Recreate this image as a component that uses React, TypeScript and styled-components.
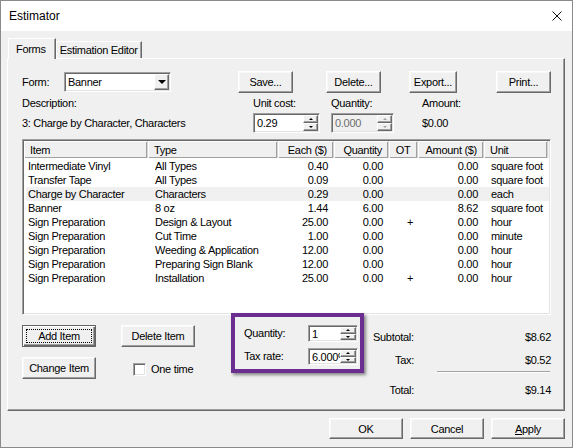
import styled, { createGlobalStyle } from "styled-components";

const GlobalStyle = createGlobalStyle`
  html, body {
    margin: 0;
    padding: 0;
    background: #fff;
  }
  body {
    font-family: "Liberation Sans", Arial, sans-serif;
    font-size: 11px;
    letter-spacing: -0.3px;
    color: #000;
  }
`;

const Window = styled.div`
  width: 573px;
  height: 448px;
  box-sizing: border-box;
  border: 1px solid #8a8a8a;
  background: #f0f0f0;
  display: flex;
  flex-direction: column;
`;

const TitleBar = styled.div`
  height: 30px;
  flex: none;
  background: #fff;
  display: flex;
  align-items: center;
  justify-content: space-between;
  padding: 0 10px 0 8px;
  font-size: 12px;
  letter-spacing: 0;
`;

const Body = styled.div`
  padding: 7px 7px 0 6px;
  display: flex;
  flex-direction: column;
`;

const TabsRow = styled.div`
  height: 20px;
  display: flex;
  align-items: flex-end;
  padding-left: 1px;
`;

const Tab = styled.div<{ $active?: boolean }>`
  box-sizing: border-box;
  height: ${(p) => (p.$active ? 21 : 17)}px;
  margin-bottom: ${(p) => (p.$active ? -1 : 0)}px;
  padding: ${(p) => (p.$active ? "0 9px 0 7px" : "0 3px 0 3px")};
  display: flex;
  align-items: center;
  background: #f0f0f0;
  border-top: 1px solid #fff;
  border-left: 1px solid #fff;
  border-right: 1px solid #696969;
  box-shadow: inset -1px 0 #a0a0a0;
  position: relative;
  z-index: ${(p) => (p.$active ? 1 : 0)};
`;

const Panel = styled.div`
  box-sizing: border-box;
  width: 558px;
  height: 353px;
  border: 1px solid;
  border-color: #fff #696969 #696969 #fff;
  box-shadow: inset -1px -1px #a0a0a0;
  padding: 12px 13px 0 14px;
  display: flex;
  flex-direction: column;
`;

const TopRow = styled.div`
  display: flex;
  align-items: center;
  height: 22px;
`;

const Label = styled.span<{ $w?: number }>`
  width: ${(p) => (p.$w ? `${p.$w}px` : "auto")};
  line-height: 13px;
  white-space: nowrap;
`;

const Button = styled.button<{ $w: number; $h?: number; $ml?: number; $default?: boolean }>`
  position: relative;
  box-sizing: border-box;
  width: ${(p) => p.$w}px;
  height: ${(p) => p.$h ?? 22}px;
  margin-left: ${(p) => p.$ml ?? 0}px;
  padding: 0;
  flex: none;
  font: inherit;
  letter-spacing: inherit;
  color: #000;
  background: #f0f0f0;
  border: 1px solid;
  border-color: ${(p) => (p.$default ? "#646464" : "#fff #696969 #696969 #fff")};
  box-shadow: ${(p) =>
    p.$default
      ? "inset 1px 1px #fff, inset -1px -1px #696969, inset -2px -2px #a0a0a0"
      : "inset -1px -1px #a0a0a0, inset 1px 1px #f8f8f8"};

  &::after {
    content: "";
    display: ${(p) => (p.$default ? "block" : "none")};
    position: absolute;
    inset: 3px;
    border: 1px dotted #000;
  }

  u {
    text-decoration: underline;
  }
`;

const Field = styled.div<{ $w: number; $h?: number; $disabled?: boolean }>`
  box-sizing: border-box;
  width: ${(p) => p.$w}px;
  height: ${(p) => p.$h ?? 20}px;
  border: 1px solid;
  border-color: #a0a0a0 #fff #fff #a0a0a0;
  box-shadow: inset 1px 1px #696969, inset -1px -1px #e3e3e3;
  background: ${(p) => (p.$disabled ? "#f0f0f0" : "#fff")};
  color: ${(p) => (p.$disabled ? "#6d6d6d" : "#000")};
  padding: 1px 1px 1px 2px;
  display: flex;
  align-items: stretch;
`;

const FieldText = styled.span`
  flex: 1;
  overflow: hidden;
  white-space: nowrap;
  display: flex;
  align-items: center;
  padding-left: 1px;
`;

const SpinCol = styled.div<{ $w?: number }>`
  width: ${(p) => p.$w ?? 15}px;
  display: flex;
  flex-direction: column;
`;

const SpinBtn = styled.div<{ $up?: boolean; $disabled?: boolean }>`
  flex: 1;
  box-sizing: border-box;
  border: 1px solid;
  border-color: #fff #696969 #696969 #fff;
  box-shadow: inset -1px -1px #a0a0a0;
  background: #f0f0f0;
  display: flex;
  align-items: center;
  justify-content: center;

  &::after {
    content: "";
    width: 0;
    height: 0;
    border-left: 2px solid transparent;
    border-right: 2px solid transparent;
    ${(p) => (p.$up ? "border-bottom" : "border-top")}: 2px solid
      ${(p) => (p.$disabled ? "#a0a0a0" : "#000")};
  }
`;

const DropBtn = styled.div`
  width: 15px;
  box-sizing: border-box;
  border: 1px solid;
  border-color: #fff #696969 #696969 #fff;
  box-shadow: inset -1px -1px #a0a0a0;
  background: #f0f0f0;
  display: flex;
  align-items: center;
  justify-content: center;

  &::after {
    content: "";
    border-left: 4px solid transparent;
    border-right: 4px solid transparent;
    border-top: 4px solid #000;
  }
`;

const InfoGrid = styled.div`
  display: grid;
  grid-template-columns: 231px 78px 91px 1fr;
  grid-template-rows: 13px 20px;
  row-gap: 3px;
  margin-top: 4px;
  align-items: center;
`;

const ListView = styled.div`
  box-sizing: border-box;
  margin-top: 6px;
  width: 529px;
  height: 176px;
  border: 1px solid;
  border-color: #a0a0a0 #fff #fff #a0a0a0;
  box-shadow: inset 1px 1px #696969, inset -1px -1px #e3e3e3;
  padding: 1px;
  background: #fff;
`;

const HEAD_COLS = "124px 130px 56px 55px 29px 66px 64px";
const ROW_COLS = "122px 130px 56px 55px 29px 66px 64px";

const HeaderRow = styled.div`
  display: grid;
  grid-template-columns: ${HEAD_COLS};
  height: 17px;
  background: #f0f0f0;
`;

type Align = "left" | "right" | "center";

const HeadCell = styled.div<{ $align: Align }>`
  box-sizing: border-box;
  display: flex;
  align-items: center;
  justify-content: ${(p) =>
    p.$align === "right" ? "flex-end" : p.$align === "center" ? "center" : "flex-start"};
  padding: 0 6px;
  box-shadow: inset 1px 1px #fff, inset -1px -1px #a0a0a0;
  border-right: 1px solid #d5d5d5;
  white-space: nowrap;
`;

const Rows = styled.div`
  padding-top: 1px;
`;

const Row = styled.div<{ $hl?: boolean }>`
  display: grid;
  grid-template-columns: ${ROW_COLS};
  height: 14px;
  margin-left: 2px;
  width: 523px;
  background: ${(p) => (p.$hl ? "#f0f0f0" : "transparent")};
`;

const Cell = styled.div<{ $align: Align; $pl?: number; $pr?: number }>`
  line-height: 14px;
  white-space: nowrap;
  overflow: hidden;
  text-align: ${(p) => p.$align};
  padding-left: ${(p) => p.$pl ?? 7}px;
  padding-right: ${(p) => p.$pr ?? 6}px;
`;

const BottomRow = styled.div`
  display: flex;
  align-items: flex-start;
  margin-top: 10px;
`;

const ItemButtons = styled.div`
  width: 173px;
  display: grid;
  grid-template-columns: 99px 74px;
  grid-template-rows: 22px 22px;
  row-gap: 10px;
  align-items: center;
`;

const CheckWrap = styled.label`
  display: flex;
  align-items: center;
  gap: 5px;
  margin-left: 12px;
  margin-top: 2px;
  white-space: nowrap;
`;

const CheckBox = styled.span`
  width: 13px;
  height: 13px;
  box-sizing: border-box;
  border: 1px solid;
  border-color: #a0a0a0 #fff #fff #a0a0a0;
  box-shadow: inset 1px 1px #696969, inset -1px -1px #e3e3e3;
  background: #fff;
`;

const TaxGroup = styled.div`
  position: relative;
  margin-left: 49px;
  display: grid;
  grid-template-columns: 64px 50px;
  grid-template-rows: 17px 17px;
  row-gap: 6px;
  align-items: center;

  &::after {
    content: "";
    position: absolute;
    top: -12px;
    left: -13px;
    right: -6px;
    bottom: -8px;
    border: 4px solid #6c2d91;
    box-shadow: 2px 2px 3px rgba(0, 0, 0, 0.45);
    pointer-events: none;
  }
`;

const Totals = styled.div`
  margin-left: 15px;
  margin-top: 5px;
  width: 178px;
  display: flex;
  flex-direction: column;
`;

const TotalLine = styled.div<{ $mt?: number }>`
  display: flex;
  justify-content: space-between;
  height: 14px;
  line-height: 14px;
  margin-top: ${(p) => p.$mt ?? 0}px;
`;

const TotalLabel = styled.span<{ $left?: boolean }>`
  width: 41px;
  text-align: ${(p) => (p.$left ? "left" : "right")};
  white-space: nowrap;
`;

const Rule = styled.div`
  margin: 4px 1px 0 64px;
  border-top: 1px solid #a0a0a0;
  border-bottom: 1px solid #fff;
`;

const Footer = styled.div`
  display: flex;
  justify-content: flex-end;
  gap: 7px;
  margin-top: 7px;
`;

const columns: { title: string; head: Align; cell: Align }[] = [
  { title: "Item", head: "left", cell: "left" },
  { title: "Type", head: "left", cell: "left" },
  { title: "Each ($)", head: "right", cell: "right" },
  { title: "Quantity", head: "right", cell: "right" },
  { title: "OT", head: "center", cell: "right" },
  { title: "Amount ($)", head: "right", cell: "right" },
  { title: "Unit", head: "left", cell: "left" },
];

const rows: string[][] = [
  ["Intermediate Vinyl", "All Types", "0.40", "0.00", "", "0.00", "square foot"],
  ["Transfer Tape", "All Types", "0.09", "0.00", "", "0.00", "square foot"],
  ["Charge by Character", "Characters", "0.29", "0.00", "", "0.00", "each"],
  ["Banner", "8 oz", "1.44", "6.00", "", "8.62", "square foot"],
  ["Sign Preparation", "Design & Layout", "25.00", "0.00", "+", "0.00", "hour"],
  ["Sign Preparation", "Cut Time", "1.00", "0.00", "", "0.00", "minute"],
  ["Sign Preparation", "Weeding & Application", "12.00", "0.00", "", "0.00", "hour"],
  ["Sign Preparation", "Preparing Sign Blank", "12.00", "0.00", "", "0.00", "hour"],
  ["Sign Preparation", "Installation", "25.00", "0.00", "+", "0.00", "hour"],
];

const Spinner = ({
  value,
  w,
  h,
  spinW,
  disabled,
}: {
  value: string;
  w: number;
  h?: number;
  spinW?: number;
  disabled?: boolean;
}) => (
  <Field $w={w} $h={h} $disabled={disabled}>
    <FieldText>{value}</FieldText>
    <SpinCol $w={spinW}>
      <SpinBtn $up $disabled={disabled} />
      <SpinBtn $disabled={disabled} />
    </SpinCol>
  </Field>
);

const CloseIcon = () => (
  <svg width="10" height="10" viewBox="0 0 10 10">
    <path d="M0.5 0.5 L9.5 9.5 M9.5 0.5 L0.5 9.5" stroke="#111" strokeWidth="1" fill="none" />
  </svg>
);

const App = () => {
  return (
    <>
      <GlobalStyle />
      <Window>
        <TitleBar>
          <span>Estimator</span>
          <CloseIcon />
        </TitleBar>
        <Body>
          <TabsRow>
            <Tab $active>Forms</Tab>
            <Tab>Estimation Editor</Tab>
          </TabsRow>
          <Panel>
            <TopRow>
              <Label $w={42}>Form:</Label>
              <Field $w={107}>
                <FieldText>Banner</FieldText>
                <DropBtn />
              </Field>
              <Button $w={55} $ml={67}>Save...</Button>
              <Button $w={55} $ml={33}>Delete...</Button>
              <Button $w={48} $ml={28}>Export...</Button>
              <Button $w={55} $ml={39}>Print...</Button>
            </TopRow>

            <InfoGrid>
              <Label>Description:</Label>
              <Label>Unit cost:</Label>
              <Label>Quantity:</Label>
              <Label>Amount:</Label>
              <Label>3: Charge by Character, Characters</Label>
              <Spinner value="0.29" w={67} />
              <Spinner value="0.000" w={63} disabled />
              <Label>$0.00</Label>
            </InfoGrid>

            <ListView>
              <HeaderRow>
                {columns.map((c) => (
                  <HeadCell key={c.title} $align={c.head}>
                    {c.title}
                  </HeadCell>
                ))}
              </HeaderRow>
              <Rows>
                {rows.map((r, i) => (
                  <Row key={i} $hl={i === 2}>
                    {r.map((v, j) => (
                      <Cell
                        key={j}
                        $align={columns[j].cell}
                        $pl={j === 0 ? 2 : 7}
                        $pr={j === 4 ? 5 : 6}
                      >
                        {v}
                      </Cell>
                    ))}
                  </Row>
                ))}
              </Rows>
            </ListView>

            <BottomRow>
              <ItemButtons>
                <Button $w={74} $default>Add Item</Button>
                <Button $w={74}>Delete Item</Button>
                <Button $w={74}>Change Item</Button>
                <CheckWrap>
                  <CheckBox />
                  One time
                </CheckWrap>
              </ItemButtons>

              <TaxGroup>
                <Label>Quantity:</Label>
                <Spinner value="1" w={50} h={17} spinW={16} />
                <Label>Tax rate:</Label>
                <Spinner value="6.000%" w={50} h={17} spinW={16} />
              </TaxGroup>

              <Totals>
                <TotalLine>
                  <TotalLabel $left>Subtotal:</TotalLabel>
                  <span>$8.62</span>
                </TotalLine>
                <TotalLine $mt={9}>
                  <TotalLabel>Tax:</TotalLabel>
                  <span>$0.52</span>
                </TotalLine>
                <Rule />
                <TotalLine $mt={10}>
                  <TotalLabel>Total:</TotalLabel>
                  <span>$9.14</span>
                </TotalLine>
              </Totals>
            </BottomRow>
          </Panel>

          <Footer>
            <Button $w={74} $h={21}>OK</Button>
            <Button $w={74} $h={21}>Cancel</Button>
            <Button $w={74} $h={21}>
              <u>A</u>pply
            </Button>
          </Footer>
        </Body>
      </Window>
    </>
  );
};

export default App;
